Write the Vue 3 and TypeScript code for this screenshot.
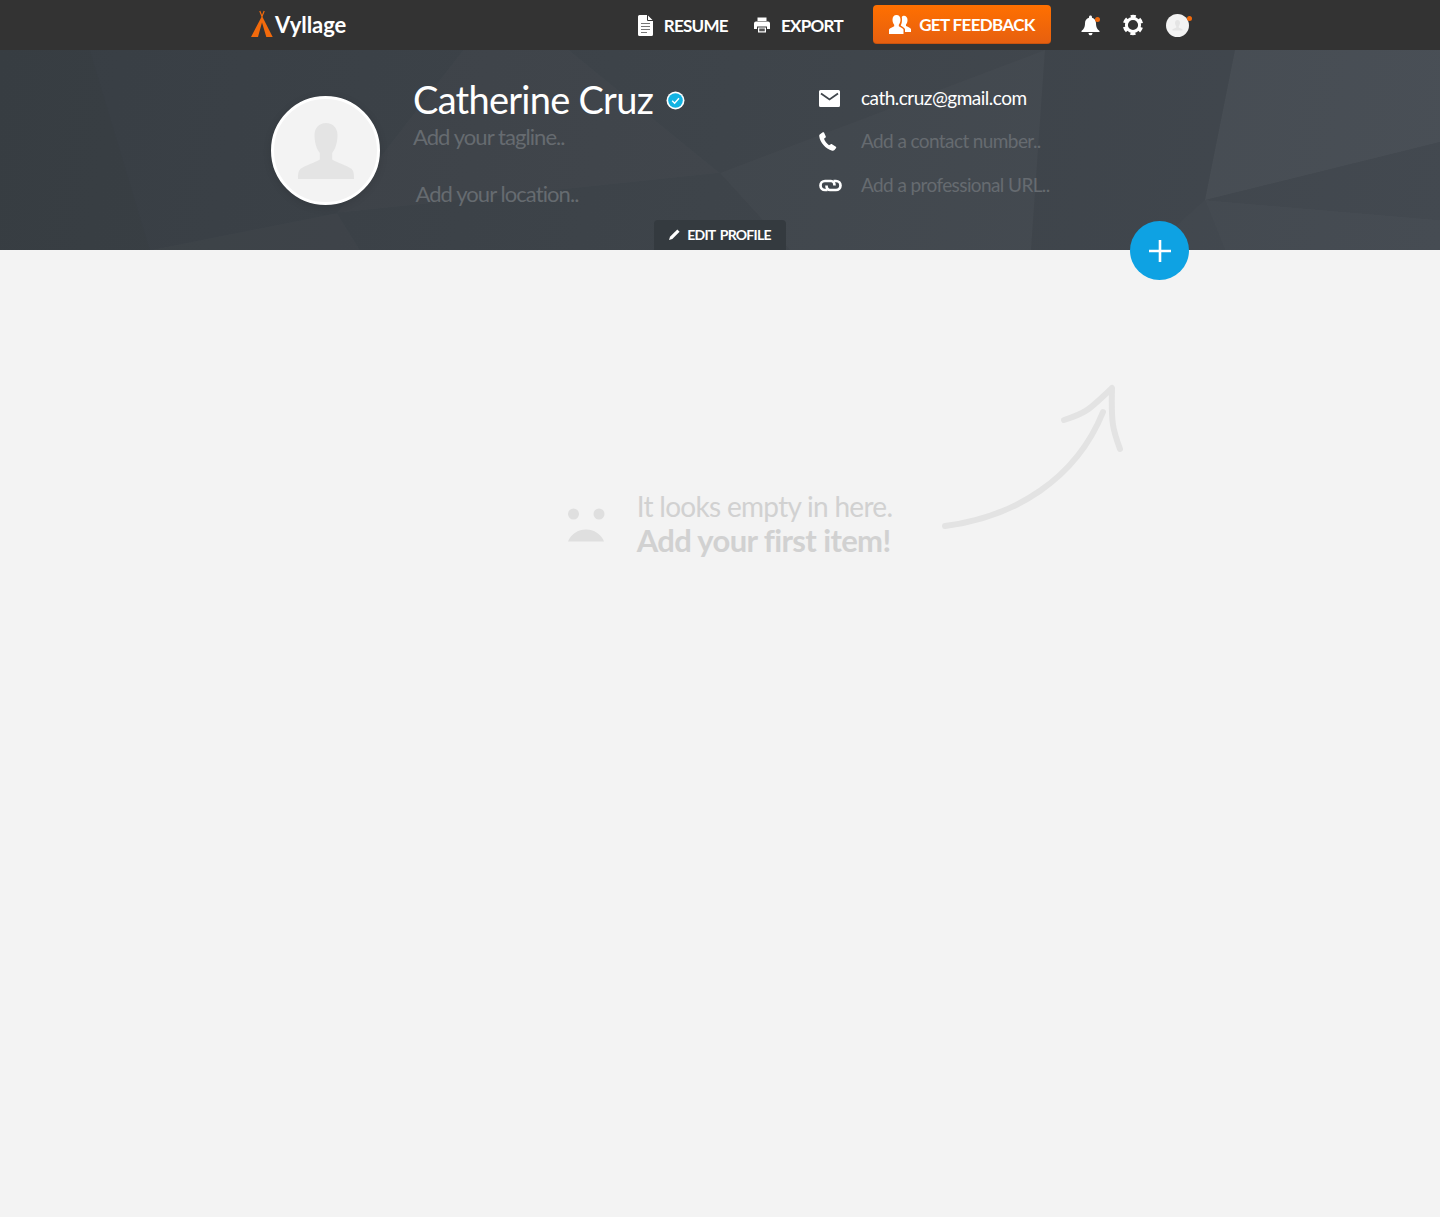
<script setup lang="ts">
const navLinks = [
  { label: 'RESUME', icon: 'doc' },
  { label: 'EXPORT', icon: 'print' },
]

const contacts = [
  { icon: 'mail', text: 'cath.cruz@gmail.com', filled: true },
  { icon: 'phone', text: 'Add a contact number..', filled: false },
  { icon: 'link', text: 'Add a professional URL..', filled: false },
]
</script>

<template>
  <div class="page">
    <header class="topbar">
      <div class="topbar__inner">
        <a class="logo">
          <svg class="logo__mark" width="23" height="28" viewBox="0 0 23 28">
            <path d="M12 6L22.700 27H16.300L12 12.500L8 27H1Z" fill="#f26a0c" />
            <path d="M9.800 1L12 6.500L14.200 1" fill="none" stroke="#f26a0c" stroke-width="1.200" />
          </svg>
          <span class="logo__text">Vyllage</span>
        </a>

        <nav class="nav">
          <a v-for="link in navLinks" :key="link.label" class="nav__link">
            <svg v-if="link.icon === 'doc'" class="nav__icon" width="15" height="21" viewBox="0 0 15 21">
              <path d="M1.500 0H9.500L15 5.500V19.500A1.500 1.500 0 0 1 13.500 21H1.500A1.500 1.500 0 0 1 0 19.500V1.500A1.500 1.500 0 0 1 1.500 0Z" fill="#fff" />
              <path d="M9.500 0V5.500H15" fill="none" stroke="#333" stroke-width="1" />
              <path d="M3 8.500H12M3 11.500H12M3 14.500H12M3 17.500H9" stroke="#777" stroke-width="1.200" />
            </svg>
            <svg v-else class="nav__icon" width="16" height="16" viewBox="0 0 16 16">
              <path d="M3.500 0.500H12.500V4H3.500Z" fill="#fff" />
              <path d="M2 4.500H14A2 2 0 0 1 16 6.500V12H13V9.500H3V12H0V6.500A2 2 0 0 1 2 4.500Z" fill="#fff" />
              <path d="M4 10.500H12V15.500H4Z" fill="#fff" />
              <path d="M5.200 11.500H10.800V14.300H5.200Z" fill="#555" />
            </svg>
            <span>{{ link.label }}</span>
          </a>

          <button class="feedback">
            <svg width="22" height="19" viewBox="0 0 22 19">
              <path d="M7.500 0C10 0 11.500 2 11.500 4.700C11.500 6.800 10.800 8.500 9.800 9.700V11.300C11.500 12.200 13.700 13 14.500 14.500V19H0V14.500C.8 13 3.500 12.200 5.200 11.300V9.700C4.200 8.500 3.500 6.800 3.500 4.700C3.500 2 5 0 7.500 0Z" fill="#fff" />
              <path d="M12.800 2C13.500 1 14.200 .8 15 .8C17 .8 18.500 2.500 18.500 5C18.500 7 17.800 8.500 17 9.500V11C18.500 11.800 21 12.600 22 14V17H16V14C15 12.500 13 11.200 11.700 10.500C12.500 9 13 7 13 5C13 4 13 3 12.800 2Z" fill="#fff" />
            </svg>
            <span>GET FEEDBACK</span>
          </button>

          <a class="icon-btn">
            <svg width="19" height="21" viewBox="0 0 19 21">
              <path d="M9.500 0.500C10.400 0.500 11 1.100 11 2V2.700C13.500 3.400 15 5.400 15 8.200C15 12.500 16.500 14.200 18.500 16V17H.5V16C2.500 14.200 4 12.500 4 8.200C4 5.400 5.500 3.400 8 2.700V2C8 1.100 8.600 0.500 9.500 0.500Z" fill="#fff" />
              <path d="M7.500 18H11.500C11.500 19.400 10.600 20.300 9.500 20.300C8.400 20.300 7.500 19.400 7.500 18Z" fill="#fff" />
            </svg>
            <i class="dot dot--bell"></i>
          </a>
          <a class="icon-btn">
            <svg width="22" height="22" viewBox="0 0 22 22">
              <circle cx="11" cy="11" r="6.600" fill="none" stroke="#fff" stroke-width="3" />
              <circle cx="11" cy="11" r="8.700" fill="none" stroke="#fff" stroke-width="3" stroke-dasharray="5 4.110" stroke-dashoffset="2.500" transform="rotate(30 11 11)" />
            </svg>
          </a>
          <a class="avatar-mini">
            <svg width="23" height="23" viewBox="0 0 23 23">
              <circle cx="11.500" cy="11.500" r="11.500" fill="#f3f3f3" />
              <path d="M11.500 6C13 6 14 7.200 14 8.800C14 10.300 13.300 11.700 12.700 12.500V13.400L16.500 15.200V16.500H6.500V15.200L10.300 13.400V12.500C9.700 11.700 9 10.300 9 8.800C9 7.200 10 6 11.500 6Z" fill="#e4e4e4" />
            </svg>
            <i class="dot dot--avatar"></i>
          </a>
        </nav>
      </div>
    </header>

    <section class="hero">
      <svg class="hero__facets" width="1440" height="200" viewBox="0 0 1440 200" preserveAspectRatio="none">
        <path d="M720 123L1045 0L1031 200H790Z" fill="#fff" opacity=".018" />
        <path d="M0 0H90L150 200H0Z" fill="#000" opacity=".014" />
        <path d="M463 0H569L720 123L337 163Z" fill="#fff" opacity=".014" />
        <path d="M337 163L360 200H150Z" fill="#fff" opacity=".014" />
        <path d="M1235 0H1440V92L1205 150Z" fill="#fff" opacity=".03" />
        <path d="M1440 92V170L1205 150Z" fill="#000" opacity=".01" />
        <path d="M1205 150L1440 170V200H1225Z" fill="#fff" opacity=".012" />
        <path d="M1045 0H1235L1205 150L1150 200H1031Z" fill="#000" opacity=".018" />
      </svg>

      <div class="hero__inner">
        <div class="photo">
          <svg width="58" height="56" viewBox="0 0 58 56">
            <path d="M29 0C36 0 40.500 5 40.500 12C40.500 19 38.500 26 35.200 30V36.500C40 39.500 50 42.500 54 45.500C56.500 47.500 57 50 57 56H1C1 50 1.500 47.500 4 45.500C8 42.500 18 39.500 22.800 36.500V30C19.500 26 17.500 19 17.500 12C17.500 5 22 0 29 0Z" fill="#e4e4e4" />
          </svg>
        </div>

        <div class="identity">
          <h1 class="identity__name">
            Catherine Cruz
            <svg class="identity__badge" width="19" height="19" viewBox="0 0 19 19">
              <circle cx="9.500" cy="9.500" r="9" fill="#fff" />
              <circle cx="9.500" cy="9.500" r="7.300" fill="#12b3e2" />
              <path d="M6.200 9.800L8.600 12.200L13 7.200" fill="none" stroke="#fff" stroke-width="1.400" />
            </svg>
          </h1>
          <p class="identity__tagline">Add your tagline..</p>
          <p class="identity__location">Add your location..</p>
        </div>

        <ul class="contacts">
          <li v-for="row in contacts" :key="row.icon" class="contacts__row">
            <span class="contacts__icon">
              <svg v-if="row.icon === 'mail'" width="21" height="17" viewBox="0 0 21 17">
                <path d="M1.500 0H19.500A1.500 1.500 0 0 1 21 1.500V15.500A1.500 1.500 0 0 1 19.500 17H1.500A1.500 1.500 0 0 1 0 15.500V1.500A1.500 1.500 0 0 1 1.500 0Z" fill="#fff" />
                <path d="M2 3.500L10.500 9.500L19 3.500" fill="none" stroke="#3f454b" stroke-width="1.800" />
              </svg>
              <svg v-else-if="row.icon === 'phone'" width="18" height="19" viewBox="0 0 18 19">
                <path d="M1 2.200L3.800 .3C4.300 0 4.800 .1 5 .6L6.800 4.400C7 4.900 6.900 5.300 6.500 5.600L5 6.800C5.800 9.300 7.700 11.700 10 13.200L11.800 12.200C12.200 12 12.600 12 13 12.300L16.900 14.800C17.300 15.100 17.400 15.600 17.100 16L15.500 18C15 18.600 14.200 19 13.200 18.800C6.500 17 1 10.500 .2 4.100C.1 3.300 .4 2.600 1 2.200Z" fill="#fff" />
              </svg>
              <svg v-else width="23" height="13" viewBox="0 0 23 13">
                <path d="M8.500 11H6A4.500 4.500 0 0 1 6 2H12C14 2 15.500 4 15.500 6.500" fill="none" stroke="#fff" stroke-width="2.700" />
                <path d="M14.500 2H17A4.500 4.500 0 0 1 17 11H11C9 11 7.500 9 7.500 6.500" fill="none" stroke="#fff" stroke-width="2.700" />
              </svg>
            </span>
            <span :class="row.filled ? 'contacts__value' : 'contacts__hint'">{{ row.text }}</span>
          </li>
        </ul>

        <button class="edit-btn">
          <svg width="11" height="11" viewBox="0 0 11 11">
            <path d="M8.300 .4L10.600 2.700L3.300 10L0 11L1 7.700Z" fill="#fff" />
          </svg>
          <span>EDIT PROFILE</span>
        </button>
        <button class="fab" aria-label="Add item">
          <svg width="24" height="24" viewBox="0 0 24 24">
            <path d="M12 1V23M1 12H23" stroke="#fff" stroke-width="2.600" />
          </svg>
        </button>
      </div>
    </section>

    <main class="empty">
      <svg class="empty__arrow" width="190" height="150" viewBox="0 0 190 150">
        <path d="M5 142C75 133 136 95 163 28" fill="none" stroke="#e3e3e3" stroke-width="6" stroke-linecap="round" />
        <path d="M124 36C146 29 149 26 172 4C171 40 173 46 180 65" fill="none" stroke="#e3e3e3" stroke-width="6" stroke-linecap="round" stroke-linejoin="round" />
      </svg>
      <div class="empty__message">
        <svg class="empty__face" width="38" height="34" viewBox="0 0 38 34">
          <circle cx="5.500" cy="6" r="5.500" fill="#dfdfdf" />
          <circle cx="31" cy="6" r="5.500" fill="#dfdfdf" />
          <path d="M0 33.500C3 26 10 21.500 18 21.500C26 21.500 33 26 36 33.500Z" fill="#dfdfdf" />
        </svg>
        <div class="empty__copy">
          <p class="empty__line">It looks empty in here.</p>
          <p class="empty__line empty__line--bold">Add your first item!</p>
        </div>
      </div>
    </main>
  </div>
</template>

<style>
html,
body {
  margin: 0;
  background: #f3f3f3;
}
</style>

<style scoped>
.page {
  min-height: 1217px;
  font-family: Lato, "Open Sans", sans-serif;
  background: #f3f3f3;
  overflow: hidden;
}

.topbar {
  height: 50px;
  background: #333;
}

.topbar__inner {
  height: 100%;
  box-sizing: border-box;
  padding: 0 248px 0 250px;
  display: flex;
  align-items: center;
  justify-content: space-between;
}

.logo {
  display: flex;
  align-items: center;
  gap: 2px;
  margin-top: -1px;
}

.logo__mark {
  margin-top: -2px;
}

.logo__text {
  font-size: 22px;
  font-weight: 700;
  color: #fff;
  letter-spacing: -0.05px;
}

.nav {
  display: flex;
  align-items: center;
}

.nav__link {
  display: flex;
  align-items: center;
  color: #fff;
  font-size: 17px;
  font-weight: 700;
  letter-spacing: -0.7px;
  margin-right: 26px;
}

.nav__icon {
  margin-right: 11px;
}

.feedback {
  width: 178px;
  height: 39px;
  padding: 0;
  margin: -2px 30px 0 4px;
  display: flex;
  align-items: center;
  justify-content: center;
  gap: 8px;
  border: 0;
  border-radius: 4px;
  background: linear-gradient(#ff7000, #e65f10);
  box-shadow: inset 0 -1px rgba(0, 0, 0, 0.12);
  color: #fff;
  font-family: inherit;
  font-size: 17px;
  font-weight: 700;
  letter-spacing: -0.64px;
}

.icon-btn {
  position: relative;
  display: flex;
  margin-right: 22px;
}

.avatar-mini {
  position: relative;
  display: flex;
  margin-right: 3px;
}

.dot {
  position: absolute;
  width: 5px;
  height: 5px;
  border-radius: 50%;
  background: #f26a0c;
}

.dot--bell {
  top: 2px;
  right: 0;
}

.dot--avatar {
  top: 2px;
  right: -3px;
}

.hero {
  position: relative;
  height: 200px;
  background: linear-gradient(100deg, #383e44 0%, #3e444a 50%, #444a51 100%);
}

.hero__facets {
  position: absolute;
  inset: 0;
}

.hero__inner {
  position: relative;
  height: 100%;
  box-sizing: border-box;
  padding-left: 271px;
  display: flex;
  align-items: flex-start;
}

.photo {
  width: 109px;
  height: 109px;
  box-sizing: border-box;
  margin-top: 46px;
  border: 3px solid #fff;
  border-radius: 50%;
  background: #f3f3f3;
  display: flex;
  align-items: flex-end;
  justify-content: center;
  padding-bottom: 23px;
  box-shadow: 0 2px 8px rgba(0, 0, 0, 0.12);
}

.identity {
  width: 405px;
  margin-left: 33px;
  padding-top: 25px;
}

.identity__name {
  margin: 0;
  display: flex;
  align-items: center;
  gap: 13px;
  font-size: 38px;
  line-height: 48px;
  font-weight: 400;
  color: #fff;
  letter-spacing: -0.73px;
}

.identity__badge {
  margin-top: 3px;
}

.identity__tagline,
.identity__location {
  margin: 0;
  font-size: 22px;
  line-height: 28px;
  color: #666b70;
  letter-spacing: -0.93px;
}

.identity__tagline {
  margin-top: -0.5px;
}

.identity__location {
  margin: 29px 0 0 2.5px;
}

.contacts {
  list-style: none;
  margin: 0;
  padding: 25.25px 0 0;
}

.contacts__row {
  display: flex;
  align-items: center;
  height: 43.5px;
}

.contacts__icon {
  width: 42.5px;
  margin: 2px 0 0 0.5px;
  display: flex;
  align-items: center;
}

.contacts__value,
.contacts__hint {
  font-size: 19px;
  letter-spacing: -0.5px;
}

.contacts__value {
  color: #fff;
}

.contacts__hint {
  color: #666b70;
  letter-spacing: -0.6px;
}

.edit-btn {
  position: absolute;
  left: 654px;
  bottom: 0;
  width: 132px;
  height: 30px;
  padding: 0 0 1px;
  display: flex;
  align-items: center;
  justify-content: center;
  gap: 7px;
  border: 0;
  border-radius: 4px 4px 0 0;
  background: #343a3f;
  color: #fff;
  font-family: inherit;
  font-size: 14px;
  font-weight: 700;
  letter-spacing: -0.75px;
  word-spacing: 2px;
}

.fab {
  position: absolute;
  left: 1130px;
  top: 171px;
  width: 59px;
  height: 59px;
  padding: 0;
  display: flex;
  align-items: center;
  justify-content: center;
  border: 0;
  border-radius: 50%;
  background: #0ea2e3;
}

.empty {
  position: relative;
  padding-top: 243.5px;
  display: flex;
  justify-content: center;
}

.empty__arrow {
  position: absolute;
  left: 940px;
  top: 134px;
}

.empty__message {
  display: flex;
  align-items: center;
  margin-left: 20px;
}

.empty__face {
  margin-right: 31px;
}

.empty__copy {
  margin-top: -5px;
}

.empty__line {
  margin: 0;
  font-size: 28px;
  line-height: 34px;
  color: #d1d1d1;
  letter-spacing: -0.7px;
}

.empty__line--bold {
  font-size: 31px;
  font-weight: 700;
  letter-spacing: -0.63px;
}
</style>
